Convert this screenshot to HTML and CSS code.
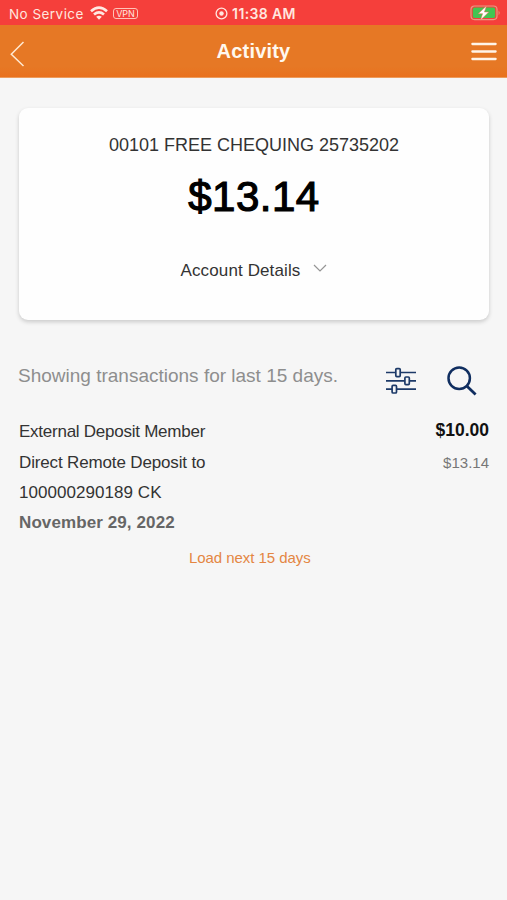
FILE: index.html
```html
<!DOCTYPE html>
<html lang="en">
<head>
<meta charset="utf-8">
<title>Activity</title>
<link rel="stylesheet" href="styles.css">
</head>
<body>
<div class="status">
  <div class="status-left">
    <span class="carrier">No Service</span>
    <svg class="wifi" width="18" height="14" viewBox="0 0 18 14"><g fill="none" stroke="#ffe9e2" stroke-width="2.7"><path d="M1 5.2Q9 -1.8 17 5.2"/><path d="M4 8.5Q9 4.3 14 8.5"/></g><path d="M6.2 10.8Q9 8.8 11.8 10.8L9 13.7Z" fill="#ffe9e2"/></svg>
    <span class="vpn">VPN</span>
  </div>
  <div class="status-time">
    <svg width="13" height="13" viewBox="0 0 13 13"><circle cx="6.5" cy="6.5" r="5.4" fill="none" stroke="#ffe6df" stroke-width="1.3"/><circle cx="6.5" cy="6.5" r="2.2" fill="#ffe6df"/></svg>
    <span class="clock">11:38 AM</span>
  </div>
  <svg class="battery" width="31" height="16" viewBox="0 0 31 16"><rect x="1" y="1" width="26" height="13.6" rx="3.5" fill="none" stroke="#e89a83" stroke-width="1.2"/><rect x="2.8" y="2.6" width="22.4" height="10.4" rx="1.8" fill="#43c552"/><path d="M28.6 5.6Q30.6 7.9 28.6 10.2Z" fill="#e89a83"/><path d="M16.6 .8L8.2 8.7H12.6L10.4 15.2L18.8 7H14.4Z" fill="#fff" stroke="#ef6a4a" stroke-width=".5"/></svg>
</div>
<header class="bar">
  <svg class="back" width="16" height="28" viewBox="0 0 16 28"><path d="M14.5 2L2.3 14.2L14.5 26" fill="none" stroke="#ffe9d2" stroke-width="1.5"/></svg>
  <h1 class="title">Activity</h1>
  <svg class="menu" width="26" height="20" viewBox="0 0 26 20"><path d="M1.4 2H24.6M1.4 9.5H24.6M1.4 17H24.6" stroke="#fff4e8" stroke-width="2.3" stroke-linecap="round"/></svg>
</header>
<main class="page">
  <section class="card">
    <div class="account">00101 FREE CHEQUING 25735202</div>
    <div class="balance">$13.14</div>
    <div class="details"><span>Account Details</span><svg width="14" height="9" viewBox="0 0 14 9"><path d="M1 1L7 7L13 1" fill="none" stroke="#959595" stroke-width="1.2"/></svg></div>
  </section>
  <div class="tools">
    <span class="showing">Showing transactions for last 15 days.</span>
    <svg class="filter" width="30" height="28" viewBox="0 0 30 28"><g fill="none" stroke="#1d3a68" stroke-width="1.7"><path d="M0 5.5H9.5M14.3 5.5H30M0 13.8H18.7M23.5 13.8H30M0 22.2H6M10.8 22.2H30"/><rect x="9.8" y="1.6" width="4.4" height="8" rx="1"/><rect x="18.9" y="10" width="4.4" height="7.6" rx="1"/><rect x="6.1" y="18.4" width="4.4" height="7.6" rx="1"/></g></svg>
    <svg class="search" width="30" height="30" viewBox="0 0 30 30"><circle cx="12.2" cy="12.2" r="10.7" fill="none" stroke="#102e60" stroke-width="2.5"/><path d="M19.8 20L28.6 28.5" stroke="#102e60" stroke-width="2.8"/></svg>
  </div>
  <div class="row">
    <div class="desc">
      <div class="l1">External Deposit Member</div>
      <div class="l2">Direct Remote Deposit to</div>
      <div class="l3">100000290189 CK</div>
      <div class="date">November 29, 2022</div>
    </div>
    <div class="amounts">
      <div class="amount">$10.00</div>
      <div class="running">$13.14</div>
    </div>
  </div>
  <div class="more">Load next 15 days</div>
</main>
</body>
</html>
```

FILE: styles.css
```css
* { box-sizing: border-box; }
body { margin: 0; height: 900px; background: #f6f6f6; font-family: "Liberation Sans", Arial, sans-serif; color: #333; white-space: nowrap; overflow: hidden; }
svg { display: block; flex: none; }
.status { height: 25px; background: #f53f3b; color: #ffe6df; display: grid; grid-template-columns: 1fr auto 1fr; align-items: center; padding: 2px 6px 0 9px; font-family: Inter, sans-serif; font-size: 13px; }
.status-left { display: flex; align-items: center; }
.carrier { font-size: 13.5px; letter-spacing: .45px; width: 80px; }
.wifi { margin: -1px 5px 0 1px; }
.vpn { font-size: 9px; line-height: 9px; border: 1px solid #ffc3b8; border-radius: 3px; padding: 0 2px; height: 11px; width: 25px; text-align: center; }
.status-time { display: flex; align-items: center; gap: 4px; margin-left: 1px; }
.clock { font-size: 14px; font-weight: 600; letter-spacing: .38px; }
.battery { justify-self: end; margin-top: -1px; }
.bar { height: 53px; background: linear-gradient(#e67825 80%, #e9711d); display: flex; justify-content: space-between; align-items: center; padding: 0 10px 0 9px; border-bottom: 1px solid #ed9b5c; }
.back { margin-top: 5px; }
.menu { margin-top: 2px; }
.title { margin: 1px 0 0; font-size: 20px; font-weight: 700; letter-spacing: .2px; color: #fff8ef; padding-left: 11px; }
.page { padding: 30px 18px 0 19px; }
.card { height: 212px; background: #fefefe; border-radius: 9px; box-shadow: 0 2px 4px rgba(0,0,0,.18); text-align: center; padding-top: 26px; }
.account { font-size: 18px; line-height: 22px; }
.balance { font-size: 42px; line-height: 48px; margin-top: 17px; color: #000; -webkit-text-stroke: 1.2px #000; letter-spacing: .5px; }
.details { display: flex; justify-content: center; align-items: center; gap: 13px; font-size: 17px; line-height: 22px; margin-top: 39px; letter-spacing: .12px; }
.details svg { margin-top: -6px; }
.tools { display: flex; align-items: center; height: 32px; margin-top: 45px; }
.showing { font-size: 19px; line-height: 22px; color: #8e8e8e; width: 368px; margin: -10px 0 0 -1px; }
.search { margin-left: 31px; }
.row { display: flex; justify-content: space-between; margin-top: 20px; }
.desc { font-size: 17px; line-height: 30.5px; }
.l1 { letter-spacing: -.25px; }
.l2 { letter-spacing: -.15px; }
.l3 { letter-spacing: .05px; }
.date { font-weight: 700; color: #666; line-height: 28px; letter-spacing: .1px; }
.amounts { text-align: right; }
.amount { font-size: 17.5px; font-weight: 700; line-height: 27px; color: #111; }
.running { font-size: 15px; line-height: 37px; color: #777; }
.more { font-size: 15px; line-height: 20px; color: #e48643; letter-spacing: -.06px; margin: 11px 0 0 170px; }
```
